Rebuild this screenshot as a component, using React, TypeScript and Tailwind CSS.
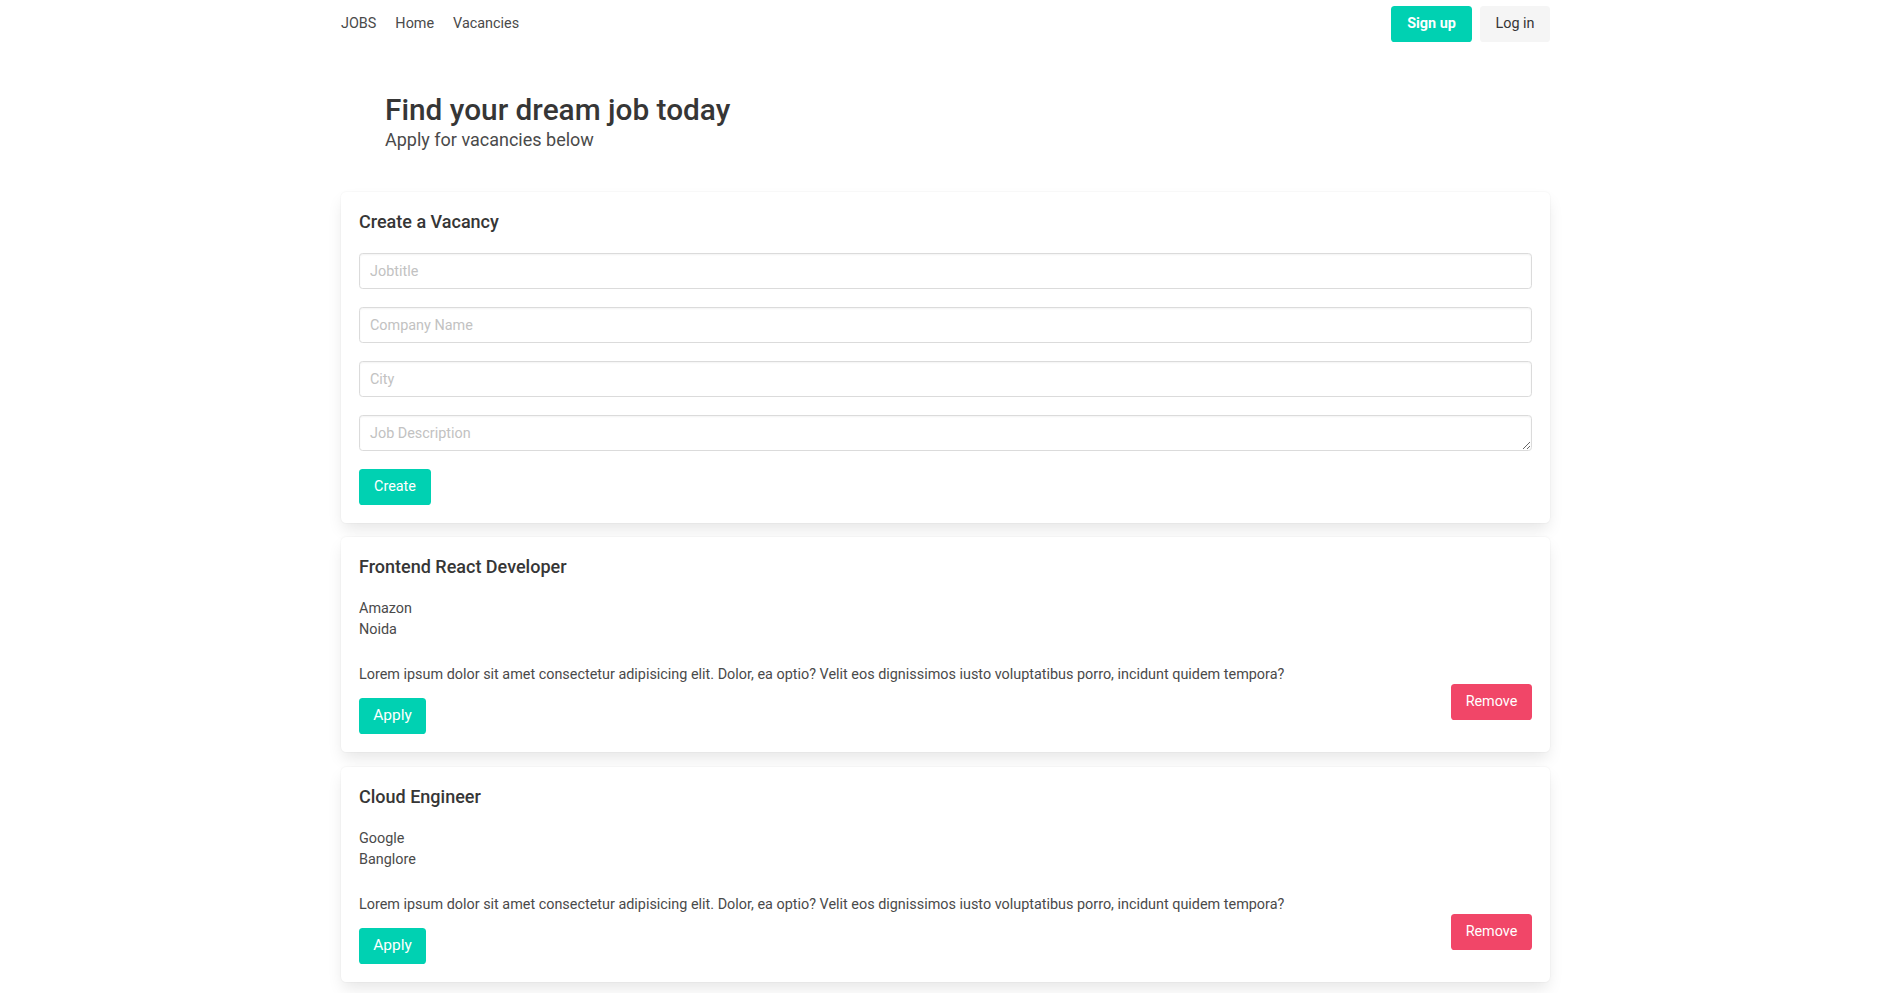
type Vacancy = {
  title: string;
  company: string;
  city: string;
  description: string;
};

const vacancies: Vacancy[] = [
  {
    title: 'Frontend React Developer',
    company: 'Amazon',
    city: 'Noida',
    description:
      'Lorem ipsum dolor sit amet consectetur adipisicing elit. Dolor, ea optio? Velit eos dignissimos iusto voluptatibus porro, incidunt quidem tempora?',
  },
  {
    title: 'Cloud Engineer',
    company: 'Google',
    city: 'Banglore',
    description:
      'Lorem ipsum dolor sit amet consectetur adipisicing elit. Dolor, ea optio? Velit eos dignissimos iusto voluptatibus porro, incidunt quidem tempora?',
  },
];

const boxClass =
  'bg-white rounded-[5.4px] p-[18px] shadow-[0_0.5em_1em_-0.125em_rgba(10,10,10,0.1),0_0_0_1px_rgba(10,10,10,0.02)]';

const inputClass =
  'w-full h-[36px] px-[10px] pt-[2px] border border-[#dbdbdb] rounded-[3.6px] text-[14.4px] text-[#363636] placeholder:text-[#c2c2c2] shadow-[inset_0_1px_2px_rgba(10,10,10,0.05)] outline-none';

const Navbar = () => (
  <nav className="w-[1209px] mx-auto h-[47px] flex items-center justify-between text-[14.4px] text-[#4a4a4a]">
    <div className="flex items-center gap-[19px]">
      <a href="#">JOBS</a>
      <a href="#">Home</a>
      <a href="#">Vacancies</a>
    </div>
    <div className="flex items-center gap-[8px]">
      <button className="w-[81px] h-[36px] rounded-[3.6px] bg-[#00d1b2] text-white font-bold">
        Sign up
      </button>
      <button className="w-[70px] h-[36px] rounded-[3.6px] bg-[#f5f5f5] text-[#363636]">
        Log in
      </button>
    </div>
  </nav>
);

const CreateVacancy = () => (
  <div className={`${boxClass} mb-[14px]`}>
    <h2 className="text-[18px] leading-[24px] font-medium text-[#363636] mb-[19px]">
      Create a Vacancy
    </h2>
    <div className="flex flex-col gap-[18px]">
      <input className={inputClass} placeholder="Jobtitle" />
      <input className={inputClass} placeholder="Company Name" />
      <input className={inputClass} placeholder="City" />
      <textarea
        rows={1}
        className="w-full h-[36px] px-[10px] pt-[7px] border border-[#dbdbdb] rounded-[3.6px] text-[14.4px] leading-[21.6px] text-[#363636] placeholder:text-[#c2c2c2] shadow-[inset_0_1px_2px_rgba(10,10,10,0.05)] outline-none block"
        placeholder="Job Description"
      />
      <div>
        <button className="w-[72px] h-[36px] rounded-[3.6px] bg-[#00d1b2] text-white text-[14.4px]">
          Create
        </button>
      </div>
    </div>
  </div>
);

const VacancyCard = ({ vacancy }: { vacancy: Vacancy }) => (
  <div className={`${boxClass} mb-[15px]`}>
    <h3 className="text-[18px] leading-[24px] font-medium text-[#363636]">
      {vacancy.title}
    </h3>
    <div className="flex items-end justify-between">
      <div className="text-[14.4px] leading-[21.6px] text-[#4a4a4a]">
        <p className="mt-[19px]">{vacancy.company}</p>
        <p>{vacancy.city}</p>
        <p className="mt-[23px]">{vacancy.description}</p>
        <button className="mt-[12.5px] w-[67px] h-[36px] rounded-[3.6px] bg-[#00d1b2] text-white text-[15.5px]">
          Apply
        </button>
      </div>
      <button className="mb-[14px] w-[81px] h-[36px] rounded-[3.6px] bg-[#f14668] text-white text-[14.4px]">
        Remove
      </button>
    </div>
  </div>
);

const App = () => {
  return (
    <div className="min-h-screen bg-white font-['Roboto',sans-serif]">
      <Navbar />
      <main className="w-[1209px] mx-auto">
        <section className="pt-[45.5px] pb-[40.5px] px-[44px]">
          <h1 className="text-[29.8px] leading-[33px] font-medium text-[#363636]">
            Find your dream job today
          </h1>
          <p className="mt-[3px] text-[18px] leading-[22.5px] text-[#4a4a4a]">
            Apply for vacancies below
          </p>
        </section>
        <CreateVacancy />
        {vacancies.map((vacancy, index) => (
          <VacancyCard key={`Vacancy-${index}`} vacancy={vacancy} />
        ))}
      </main>
    </div>
  );
};

export default App;
